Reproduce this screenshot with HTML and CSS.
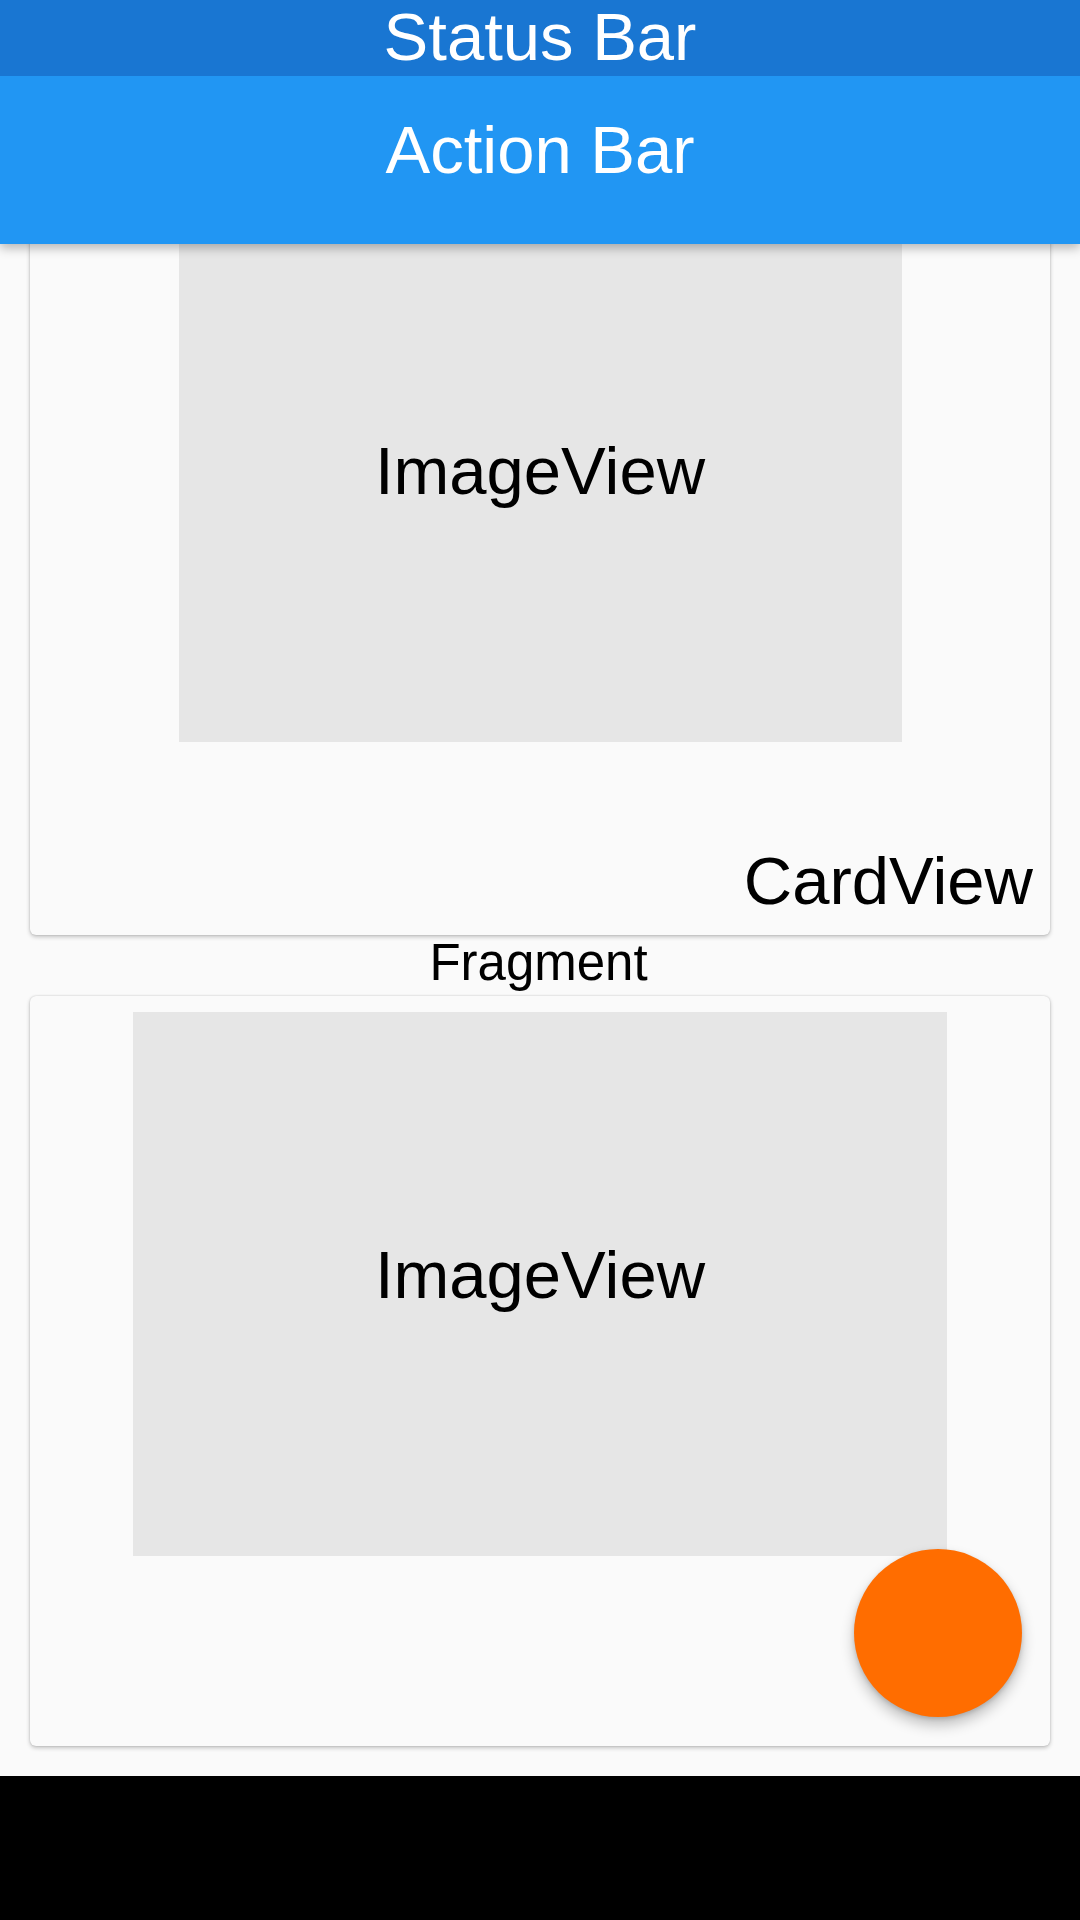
FILE: index.html
```html
<!DOCTYPE html>
<html>
<head>
<meta charset="utf-8">
<link rel="stylesheet" href="styles.css">
</head>
<body>
<div class="screen">
  <header class="appbar">
    <div class="status-bar">Status Bar</div>
    <div class="action-bar">Action Bar</div>
  </header>
  <main class="content">
    <section class="card card-top">
      <div class="image image-top"><span class="image-label">ImageView</span></div>
      <div class="card-label">CardView</div>
    </section>
    <div class="fragment-label">Fragment</div>
    <section class="card card-bottom">
      <div class="image image-bottom"><span class="image-label">ImageView</span></div>
      <div class="fab"></div>
    </section>
  </main>
  <footer class="nav-bar"></footer>
</div>
</body>
</html>
```

FILE: styles.css
```css
html, body {
  margin: 0;
  padding: 0;
}

body {
  width: 1080px;
  height: 1920px;
  overflow: hidden;
  background: #fafafa;
  font-family: "Liberation Sans", Arial, sans-serif;
}

.screen {
  display: flex;
  flex-direction: column;
  width: 1080px;
  height: 1920px;
}

.appbar {
  position: relative;
  z-index: 2;
  flex: 0 0 auto;
  box-shadow: 0 4px 10px rgba(0, 0, 0, 0.28);
}

.status-bar {
  height: 76px;
  box-sizing: border-box;
  padding-top: 3px;
  background: #1976d2;
  color: #fff;
  font-size: 67px;
  line-height: 67px;
  text-align: center;
  overflow: hidden;
}

.action-bar {
  height: 168px;
  box-sizing: border-box;
  padding-top: 40px;
  background: #2196f3;
  color: #fff;
  font-size: 67px;
  line-height: 67px;
  text-align: center;
}

.content {
  flex: 1 1 auto;
  display: flex;
  flex-direction: column;
  align-items: center;
  height: 1532px;
}

.card {
  position: relative;
  width: 1020px;
  box-sizing: border-box;
  background: #fafafa;
  border-radius: 6px;
  box-shadow: 0 2px 4px rgba(0, 0, 0, 0.22), 0 0 2px rgba(0, 0, 0, 0.18);
  display: flex;
  flex-direction: column;
  align-items: center;
}

.card-top {
  margin-top: -62px;
  height: 753px;
  padding-top: 16px;
}

.card-bottom {
  margin-top: 8px;
  height: 750px;
  padding-top: 16px;
}

.image {
  background: #e6e6e6;
  display: flex;
  flex-direction: column;
  align-items: center;
  box-sizing: border-box;
}

.image-top {
  width: 723px;
  height: 544px;
  padding-top: 239px;
}

.image-bottom {
  width: 814px;
  height: 544px;
  padding-top: 229px;
}

.image-label {
  font-size: 67px;
  line-height: 67px;
  color: #000;
}

.card-label {
  align-self: flex-end;
  margin-top: 105px;
  margin-right: 17px;
  font-size: 67px;
  line-height: 67px;
  color: #000;
}

.fragment-label {
  margin-top: 2px;
  height: 51px;
  font-size: 51px;
  line-height: 51px;
  color: #000;
  margin-right: 3px;
}

.fab {
  position: absolute;
  right: 28px;
  bottom: 29px;
  width: 168px;
  height: 168px;
  border-radius: 50%;
  background: #ff6d00;
  box-shadow: 0 8px 14px rgba(0, 0, 0, 0.24), 0 2px 4px rgba(0, 0, 0, 0.14);
}

.nav-bar {
  flex: 0 0 144px;
  height: 144px;
  background: #000;
}
```
